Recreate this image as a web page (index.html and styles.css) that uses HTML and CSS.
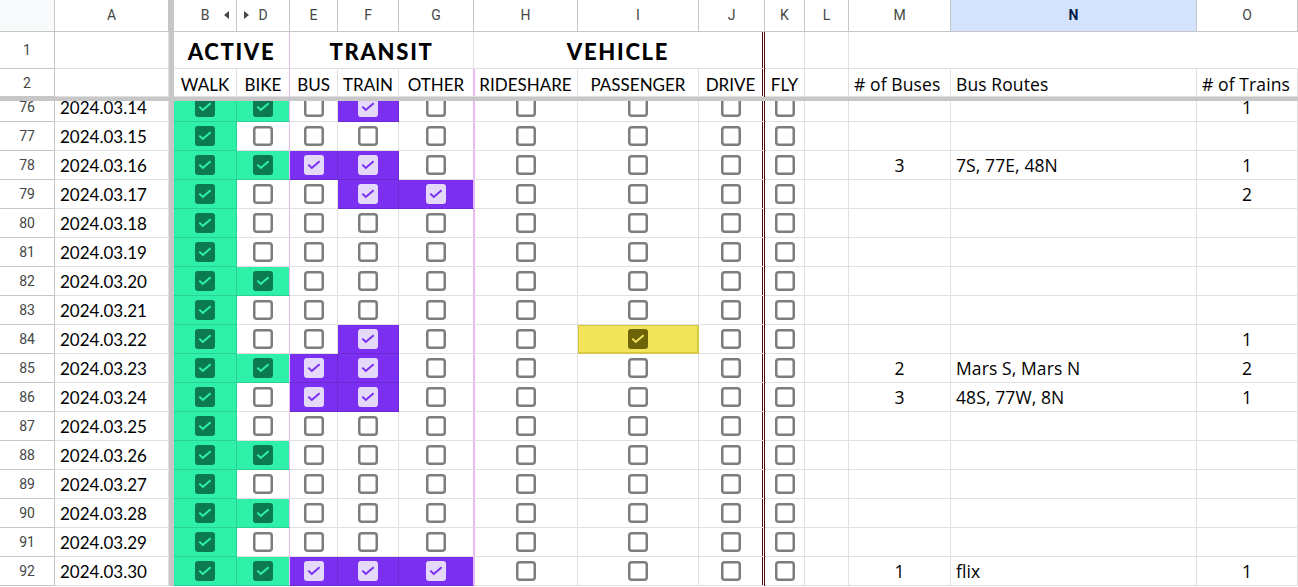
FILE: index.html
```html
<!DOCTYPE html>
<html lang="en">
<head>
  <meta charset="UTF-8">
  <title>Travel Log</title>
  <link rel="stylesheet" href="styles.css">
</head>
<body>

  <div class="row col-head">
    <div class="corner"></div>
    <div>A</div>
    <div class="freeze"></div>
    <div class="arrow-cell">B<span class="tri tri-l"></span></div>
    <div class="arrow-cell">D<span class="tri tri-r"></span></div>
    <div>E</div>
    <div>F</div>
    <div>G</div>
    <div>H</div>
    <div>I</div>
    <div>J</div>
    <div>K</div>
    <div>L</div>
    <div>M</div>
    <div class="selected">N</div>
    <div>O</div>
  </div>

  <div class="row group-row">
    <div class="rh">1</div>
    <div class="cell"></div>
    <div class="freeze"></div>
    <div class="cell group g-active">ACTIVE</div>
    <div class="cell group g-transit">TRANSIT</div>
    <div class="cell group g-vehicle">VEHICLE</div>
    <div class="cell"></div>
    <div class="cell"></div>
    <div class="cell g-blank"></div>
  </div>

  <div class="row label-row">
    <div class="rh">2</div>
    <div class="cell"></div>
    <div class="freeze"></div>
    <div class="cell lbl">WALK</div>
    <div class="cell lbl c-d">BIKE</div>
    <div class="cell lbl">BUS</div>
    <div class="cell lbl">TRAIN</div>
    <div class="cell lbl c-g">OTHER</div>
    <div class="cell lbl c-h">RIDESHARE</div>
    <div class="cell lbl">PASSENGER</div>
    <div class="cell lbl c-j">DRIVE</div>
    <div class="cell lbl">FLY</div>
    <div class="cell"></div>
    <div class="cell txt">&#35; of Buses</div>
    <div class="cell txt">Bus Routes</div>
    <div class="cell txt">&#35; of Trains</div>
  </div>

  <div class="hbar"></div>

  <div class="scroller">
    <div class="rows" id="rows"></div>
  </div>

  <script>
    // row, date, checked columns, # buses, routes, # trains
    const data = [
      [76, '2024.03.14', 'BDF', '', '', '1'],
      [77, '2024.03.15', 'B', '', '', ''],
      [78, '2024.03.16', 'BDEF', '3', '7S, 77E, 48N', '1'],
      [79, '2024.03.17', 'BFG', '', '', '2'],
      [80, '2024.03.18', 'B', '', '', ''],
      [81, '2024.03.19', 'B', '', '', ''],
      [82, '2024.03.20', 'BD', '', '', ''],
      [83, '2024.03.21', 'B', '', '', ''],
      [84, '2024.03.22', 'BFI', '', '', '1'],
      [85, '2024.03.23', 'BDEF', '2', 'Mars S, Mars N', '2'],
      [86, '2024.03.24', 'BEF', '3', '48S, 77W, 8N', '1'],
      [87, '2024.03.25', 'B', '', '', ''],
      [88, '2024.03.26', 'BD', '', '', ''],
      [89, '2024.03.27', 'B', '', '', ''],
      [90, '2024.03.28', 'BD', '', '', ''],
      [91, '2024.03.29', 'B', '', '', ''],
      [92, '2024.03.30', 'BDEFG', '1', 'flix', '1']
    ];

    const cols = ['B', 'D', 'E', 'F', 'G', 'H', 'I', 'J', 'K'];
    const tone = { B: 'green', D: 'green', E: 'purple', F: 'purple', G: 'purple', I: 'yellow' };
    const colors = {
      green: ['#0c7a50', '#2ef0a8'],
      purple: ['#e4d8fb', '#7b2ff0'],
      yellow: ['#6d6309', '#f2e55c']
    };

    function box(on, t) {
      if (!on) {
        return '<svg width="20" height="20" viewBox="0 0 20 20"><rect x="1.25" y="1.25" width="17.5" height="17.5" rx="2.5" fill="none" stroke="#7d7d7d" stroke-width="2.5"/></svg>';
      }
      const c = colors[t];
      return '<svg width="20" height="20" viewBox="0 0 20 20"><rect width="20" height="20" rx="3" fill="' + c[0] + '"/><path d="M4.3 9.6 7.8 13 15.6 6.2" fill="none" stroke="' + c[1] + '" stroke-width="2"/></svg>';
    }

    let html = '';
    data.forEach(r => {
      html += '<div class="row data-row">';
      html += '<div class="rh">' + r[0] + '</div>';
      html += '<div class="cell date">' + r[1] + '</div>';
      html += '<div class="freeze"></div>';
      cols.forEach(c => {
        const on = r[2].includes(c);
        let cls = 'cell cb c-' + c.toLowerCase();
        if (on) cls += ' fill-' + tone[c];
        html += '<div class="' + cls + '">' + box(on, tone[c]) + '</div>';
      });
      html += '<div class="cell"></div>';
      html += '<div class="cell num">' + r[3] + '</div>';
      html += '<div class="cell txt">' + r[4] + '</div>';
      html += '<div class="cell num">' + r[5] + '</div>';
      html += '</div>';
    });
    document.getElementById('rows').innerHTML = html;
  </script>

</body>
</html>
```

FILE: styles.css
```css
* { box-sizing: border-box; }

body {
  margin: 0;
  background: #fff;
  font-family: 'Open Sans', Roboto, sans-serif;
  color: #000;
  overflow: hidden;
}

.row {
  display: grid;
  grid-template-columns: 55px 114px 5px 63px 53px 48px 61px 75px 104px 121px 66px 40px 44px 102px 246px 101px;
}

/* column letters */
.col-head {
  height: 32px;
  font-family: Roboto, 'Liberation Sans', sans-serif;
  font-size: 14px;
  color: #444746;
}

.col-head > div {
  display: flex;
  align-items: center;
  justify-content: center;
  border-right: 1px solid #c4c7c5;
  border-bottom: 1px solid #c4c7c5;
  padding-bottom: 2px;
}

.col-head .corner { background: #f8f9fa; }

.col-head .freeze { border: none; background: #c7c7c7; }

.col-head .selected {
  background: #d3e3fd;
  color: #041e49;
  font-weight: bold;
}

.arrow-cell { position: relative; }

.tri {
  position: absolute;
  top: 11px;
  width: 0;
  height: 0;
  border-top: 4px solid transparent;
  border-bottom: 4px solid transparent;
}

.tri-l { right: 7px; border-right: 5px solid #444746; }
.tri-r { left: 7px; border-left: 5px solid #444746; }

/* row headers */
.rh {
  display: flex;
  align-items: center;
  justify-content: center;
  font-family: Roboto, 'Liberation Sans', sans-serif;
  font-size: 14px;
  color: #444746;
  border-right: 1px solid #c4c7c5;
  border-bottom: 1px solid #c4c7c5;
}

.freeze { background: #c7c7c7; }

.cell {
  display: flex;
  align-items: center;
  border-right: 1px solid rgba(0,0,0,0.12);
  border-bottom: 1px solid rgba(0,0,0,0.12);
  min-width: 0;
  white-space: nowrap;
  overflow: hidden;
}

/* frozen header rows */
.group-row { height: 37px; }

.group {
  justify-content: center;
  font-family: Lato, sans-serif;
  font-weight: 900;
  font-size: 22px;
  letter-spacing: 1.7px;
  padding-top: 2px;
}

.g-active { grid-column: span 2; border-right-color: #eab8f2; }
.g-transit { grid-column: span 3; }
.g-vehicle { grid-column: span 3; border-right: 3px double #4d0d0d; }
.g-blank { grid-column: span 3; border-right: none; }

.label-row { height: 28px; }

.lbl {
  justify-content: center;
  font-family: Lato, sans-serif;
  font-size: 17px;
  padding-top: 3px;
}

.txt {
  padding-left: 5px;
  font-size: 17.5px;
  letter-spacing: 0.1px;
}

.label-row .txt { padding-top: 2px; }

.hbar {
  height: 4px;
  background: #c7c7c7;
}

/* scrolled body */
.scroller {
  height: 486px;
  overflow: hidden;
}

.rows { margin-top: -8px; }

.data-row { height: 29px; }

.date {
  padding-left: 5px;
  font-family: Lato, sans-serif;
  font-size: 17px;
}

.cb { justify-content: center; }

.cb svg { display: block; }

.num {
  justify-content: center;
  font-size: 17.5px;
}

.c-d { border-right-color: #eab8f2; }
.c-g { border-right-color: #eab8f2; }
.c-h { box-shadow: inset 1px 0 0 #eab8f2; }
.c-j { border-right: 3px double #4d0d0d; }

.fill-green { background: #2ef0a8; }
.fill-purple { background: #7b2ff0; }
.fill-yellow {
  background: #f2e55c;
  box-shadow: inset 0 0 0 1px #d8c83c;
}
```
